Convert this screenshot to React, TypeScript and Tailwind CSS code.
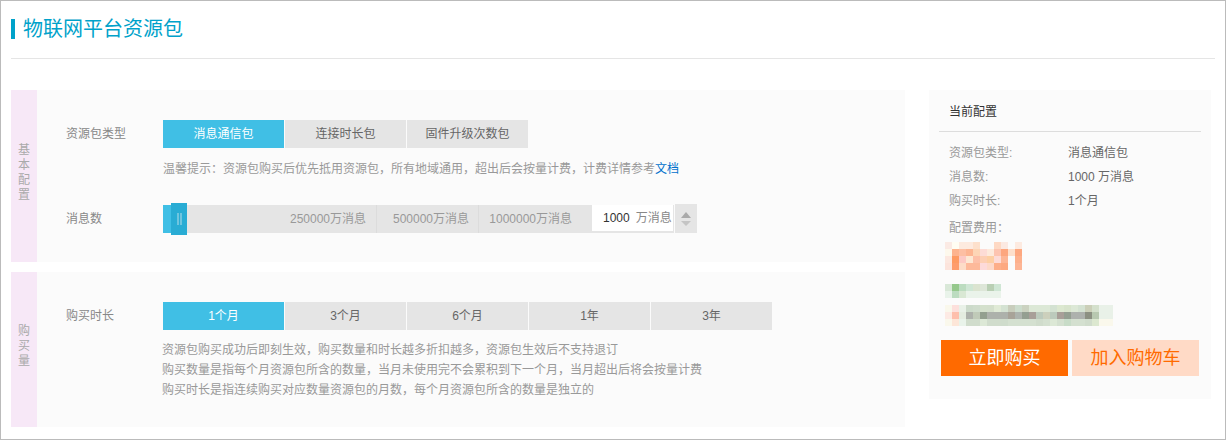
import React from 'react';

// 打码区域的色块，每格 7px
const BLUR_PRICE = [
  ['#fbeae4', '#fffdf3', '#fdeadf', '#fdeadf', '#fde0cc', '#fbfbfb', '#fbfbfb', '#fed9c4', '#fbe9e2', '#fbfbfb', '#fdeae0'],
  ['#fdf8ec', '#fdb38e', '#fdbfa3', '#fdb592', '#fdd5b6', '#fddcd6', '#fdeadc', '#fdc4b0', '#fda67e', '#fddfcb', '#fda880'],
  ['#fce8e0', '#fe9a62', '#fdc9c4', '#fde8d4', '#fdc0a8', '#fdcfb4', '#fdcfa4', '#fddbd6', '#fdb595', '#fbfbfb', '#fdb08c'],
  ['#fce4dc', '#fe9c6c', '#fddcc8', '#fdb99a', '#fdb99a', '#fddada', '#fdd9c9', '#fdae88', '#fda880', '#fbfbfb', '#fdb595'],
];

const BLUR_GREEN = [
  ['#d9e8d8', '#95c88c', '#bcdcc0', '#cfe6d4', '#dbe4d0', '#dde6d8', '#b9cfb4', '#cfe6d4'],
  ['#e9f3ea', '#bcdcc0', '#d9e8d4', '#eaf3ea', '#eaf3ea', '#eaf3ea', '#eaf3ea', '#eaf3ea'],
];

const BLUR_LINE = [
  ['#faf8ec', '#fde0dc', '#e9f1e8', '#ccdaca', '#cfdccc', '#d4e0cc', '#d4dfcc', '#e0ead6', '#d4e2d2', '#c8cdbc', '#ccdccc', '#cbd2c0', '#dce8d6', '#dce8d6', '#dce8d6', '#d4e2d2', '#dce8d0', '#d8e4cc', '#dce8d6', '#d4e2d2', '#cbcfb8', '#d4e0cc', '#e9f1e8', '#e9f1e8'],
  ['#fdeae4', '#febfac', '#e4ece0', '#adb1ab', '#c0cab8', '#939f8f', '#adb1ab', '#adb1ab', '#adb1ab', '#a8a398', '#adb3ad', '#949f91', '#a89f98', '#bccabc', '#ccd0bc', '#bccabc', '#a89f98', '#949f91', '#adb1ad', '#adb1ad', '#8c9082', '#b8c8b0', '#e9f1e8', '#e9f1e8'],
  ['#faf8ec', '#fde6d8', '#e9f3ea', '#d0dccc', '#d0dccc', '#dce8d6', '#d0dccc', '#d0dccc', '#cfdccc', '#d4e0d0', '#d4e0d0', '#d4e0d0', '#d4e0d0', '#d0dccc', '#d4e0d0', '#dce8d6', '#d4e0d0', '#c8dcc8', '#d4e0d0', '#d4e0d0', '#d0dccc', '#dce8d0', '#faf8ec', '#faf8ec'],
];

const Mosaic: React.FC<{ rows: string[][]; className?: string }> = ({ rows, className }) => (
  <svg
    className={className}
    width={rows[0].length * 7}
    height={rows.length * 7}
    shapeRendering="crispEdges"
  >
    {rows.map((row, y) =>
      row.map((color, x) => (
        <rect key={`${x}-${y}`} x={x * 7} y={y * 7} width={7} height={7} fill={color} />
      ))
    )}
  </svg>
);

const Tab: React.FC<{ label: string; active?: boolean }> = ({ label, active }) => (
  <div
    className={`w-[121px] h-7 mr-px flex items-center justify-center ${
      active ? 'bg-[#40bfe5] text-white' : 'bg-[#e5e5e5] text-[#666]'
    }`}
  >
    {label}
  </div>
);

const SideLabel: React.FC<{ chars: string[] }> = ({ chars }) => (
  <div className="w-[26px] shrink-0 bg-[#f7e8f7] pb-[7px] flex flex-col items-center justify-center text-[#aaa] leading-[15px]">
    {chars.map((c) => (
      <span key={c}>{c}</span>
    ))}
  </div>
);

const SummaryRow: React.FC<{ label: string; value: string }> = ({ label, value }) => (
  <div className="flex h-6 items-center">
    <span className="w-[119px] text-[#999]">{label}</span>
    <span className="text-[#666]">{value}</span>
  </div>
);

export default function App() {
  return (
    <div className="w-[1226px] h-[440px] box-border border border-[#bbb] bg-white px-[10px] text-xs font-['Liberation_Sans','Noto_Sans_CJK_SC',sans-serif] overflow-hidden">
      <div className="h-[58px] box-border border-b border-[#e5e5e5] pt-[18px]">
        <div className="flex items-center">
          <div className="w-1 h-5 bg-[#00a2ca]" />
          <span className="ml-2 text-xl leading-5 text-[#00a2ca]">物联网平台资源包</span>
        </div>
      </div>

      <div className="mt-[31px] flex">
        <div className="w-[894px] shrink-0">
          <div className="h-[172px] flex bg-[#fbfbfb]">
            <SideLabel chars={['基', '本', '配', '置']} />
            <div className="flex-1 pt-[30px]">
              <div className="flex items-center">
                <span className="w-[126px] pl-[29px] text-[#888]">资源包类型</span>
                <Tab label="消息通信包" active />
                <Tab label="连接时长包" />
                <Tab label="固件升级次数包" />
              </div>
              <p className="ml-[126px] mt-[12px] leading-[18px] text-[#999]">
                温馨提示：资源包购买后优先抵用资源包，所有地域通用，超出后会按量计费，计费详情参考
                <span className="text-[#0070cc]">文档</span>
              </p>
              <div className="mt-[26px] flex items-center">
                <span className="w-[126px] pl-[29px] text-[#888]">消息数</span>
                <div className="relative flex h-7 w-[429px] bg-[#e5e5e5] text-[#999]">
                  <div className="w-[214px] border-r border-[#dcdcdc] pr-[10px] flex items-center justify-end">250000万消息</div>
                  <div className="w-[102px] border-r border-[#dcdcdc] pr-[9px] flex items-center justify-end">500000万消息</div>
                  <div className="flex-1 pr-[20px] flex items-center justify-end">1000000万消息</div>
                  <div className="absolute left-0 top-0 h-7 w-[12px] bg-[#40bfe5]" />
                  <div className="absolute left-2 -top-0.5 h-8 w-4 bg-[#29acd4] flex items-center justify-center gap-px">
                    <span className="w-0.5 h-3 bg-[#6fc5df]" />
                    <span className="w-0.5 h-3 bg-[#6fc5df]" />
                  </div>
                </div>
                <div className="w-[82px] h-7 box-border bg-white border-b-2 border-r border-[#e5e5e5] flex items-center whitespace-nowrap">
                  <span className="ml-[11px] text-[#333]">1000</span>
                  <span className="ml-[6px] text-[#888]">万消息</span>
                </div>
                <div className="ml-px w-[22px] h-[29px] bg-[#e5e5e5] flex flex-col items-center justify-center gap-[3px]">
                  <span className="w-0 h-0 border-x-[5px] border-x-transparent border-b-[6px] border-b-[#aaa]" />
                  <span className="w-0 h-0 border-x-[5px] border-x-transparent border-t-[5px] border-t-[#c4c4c4]" />
                </div>
              </div>
            </div>
          </div>

          <div className="mt-[10px] h-[155px] flex bg-[#fbfbfb]">
            <SideLabel chars={['购', '买', '量']} />
            <div className="flex-1 pt-[30px]">
              <div className="flex items-center">
                <span className="w-[126px] pl-[29px] text-[#888]">购买时长</span>
                <Tab label="1个月" active />
                <Tab label="3个月" />
                <Tab label="6个月" />
                <Tab label="1年" />
                <Tab label="3年" />
              </div>
              <div className="ml-[125px] mt-[10px] leading-5 text-[#999]">
                <p>资源包购买成功后即刻生效，购买数量和时长越多折扣越多，资源包生效后不支持退订</p>
                <p>购买数量是指每个月资源包所含的数量，当月未使用完不会累积到下一个月，当月超出后将会按量计费</p>
                <p>购买时长是指连续购买对应数量资源包的月数，每个月资源包所含的数量是独立的</p>
              </div>
            </div>
          </div>
        </div>

        <div className="ml-6 w-[282px] h-[309px] bg-[#fbfbfb] px-[10px]">
          <div className="h-[42px] pt-[2px] border-b border-[#ddd] pl-[10px] flex items-center text-[#333]">当前配置</div>
          <div className="pl-[10px] pt-[9px]">
            <SummaryRow label="资源包类型:" value="消息通信包" />
            <SummaryRow label="消息数:" value="1000 万消息" />
            <SummaryRow label="购买时长:" value="1个月" />
            <div className="mt-[3px] h-6 flex items-center text-[#999]">配置费用：</div>
            <Mosaic rows={BLUR_PRICE} className="-ml-1 mt-[2px]" />
            <Mosaic rows={BLUR_GREEN} className="-ml-1 mt-[14px]" />
            <Mosaic rows={BLUR_LINE} className="-ml-1 mt-[7px]" />
          </div>
          <div className="mt-[14px] ml-[2px] flex gap-1">
            <div className="w-[127px] h-9 bg-[#ff6a00] text-white text-lg flex items-center justify-center">立即购买</div>
            <div className="w-[127px] h-9 bg-[#ffdac6] text-[#ff6a00] text-lg flex items-center justify-center">加入购物车</div>
          </div>
        </div>
      </div>
    </div>
  );
}
